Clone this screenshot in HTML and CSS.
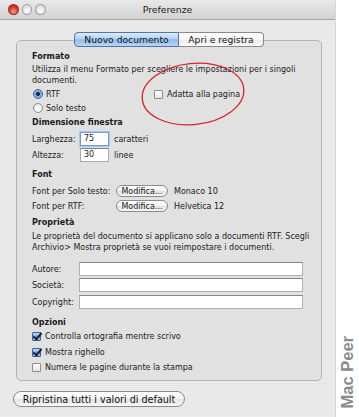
FILE: index.html
```html
<!DOCTYPE html>
<html lang="it">
  <head>
    <title>Preferenze</title>
    <meta charset="UTF-8" />
    <link rel="stylesheet" href="styles.css">
  </head>
  <body>
  <div class="screen">
    <div class="window">
      <div class="titlebar">
        <div class="lights">
          <span class="light light-red"></span>
          <span class="light"></span>
          <span class="light"></span>
        </div>
        <div class="title">Preferenze</div>
        <div class="lights-spacer"></div>
      </div>

      <div class="content">
        <div class="tabs">
          <div class="tab tab-active">Nuovo documento</div>
          <div class="tab tab-other">Apri e registra</div>
        </div>

        <div class="group">
          <div class="heading">Formato</div>
          <p class="desc">Utilizza il menu Formato per scegliere le impostazioni per i singoli<br>documenti.</p>
          <div class="row radio-row first-radio">
            <div class="radio-item">
              <span class="radio radio-on"></span>
              <span>RTF</span>
            </div>
            <div class="check-item">
              <span class="checkbox"></span>
              <span>Adatta alla pagina</span>
            </div>
          </div>
          <div class="row radio-row">
            <div class="radio-item">
              <span class="radio"></span>
              <span>Solo testo</span>
            </div>
          </div>

          <div class="heading heading-size">Dimensione finestra</div>
          <div class="row field-row field-first">
            <span class="field-label">Larghezza:</span>
            <span class="num-input num-focus">75</span>
            <span class="unit">caratteri</span>
          </div>
          <div class="row field-row">
            <span class="field-label">Altezza:</span>
            <span class="num-input">30</span>
            <span class="unit">linee</span>
          </div>

          <div class="heading heading-font">Font</div>
          <div class="row font-row font-first">
            <span class="font-label">Font per Solo testo:</span>
            <span class="small-btn">Modifica...</span>
            <span class="font-name">Monaco 10</span>
          </div>
          <div class="row font-row">
            <span class="font-label">Font per RTF:</span>
            <span class="small-btn">Modifica...</span>
            <span class="font-name">Helvetica 12</span>
          </div>

          <div class="heading heading-prop">Proprietà</div>
          <p class="desc desc-prop">Le proprietà del documento si applicano solo a documenti RTF. Scegli<br>Archivio&gt; Mostra proprietà se vuoi reimpostare i documenti.</p>
          <div class="row prop-row prop-first">
            <span class="prop-label">Autore:</span>
            <span class="text-input"></span>
          </div>
          <div class="row prop-row">
            <span class="prop-label">Società:</span>
            <span class="text-input"></span>
          </div>
          <div class="row prop-row prop-last">
            <span class="prop-label">Copyright:</span>
            <span class="text-input"></span>
          </div>

          <div class="heading heading-opt">Opzioni</div>
          <div class="row opt-row">
            <span class="checkbox checkbox-on"></span>
            <span>Controlla ortografia mentre scrivo</span>
          </div>
          <div class="row opt-row opt-mid">
            <span class="checkbox checkbox-on"></span>
            <span>Mostra righello</span>
          </div>
          <div class="row opt-row">
            <span class="checkbox"></span>
            <span>Numera le pagine durante la stampa</span>
          </div>
        </div>

        <div class="reset-btn">Ripristina tutti i valori di default</div>
      </div>
    </div>

    <div class="side">
      <span class="watermark">Mac Peer</span>
    </div>

    <!-- red marker drawn over the screenshot -->
    <svg class="marker" width="359" height="417" viewBox="0 0 359 417">
      <ellipse cx="193" cy="94" rx="51" ry="30.5" transform="rotate(-6 193 94)" fill="none" stroke="#d8232a" stroke-width="1.3"/>
    </svg>
  </div>
  </body>
</html>
```

FILE: styles.css
```css
 body {
  margin: 0;
  font-family: "DejaVu Sans", "Liberation Sans", sans-serif;
  font-size: 8px;
  color: #1a1a1a;
  background-color: white;
 }

 .screen {
  position: relative;
  display: flex;
  width: 359px;
  height: 417px;
  overflow: hidden;
 }

 .window {
  width: 336px;
  height: 417px;
  background: repeating-linear-gradient(to bottom, #ececec 0px, #ececec 1px, #e6e6e6 1px, #e6e6e6 2px);
  border-right: 1px solid #d6d6d6;
  box-sizing: border-box;
 }

 .titlebar {
  display: flex;
  align-items: center;
  height: 20px;
  box-sizing: border-box;
  background: linear-gradient(to bottom, #e9e9e9, #d2d2d2);
  border-bottom: 1px solid #a3a3a3;
 }

 .lights {
  display: flex;
  gap: 3px;
  width: 46px;
  padding-left: 8px;
  box-sizing: border-box;
 }

 .lights-spacer {
  width: 46px;
 }

 .light {
  width: 9px;
  height: 9px;
  border-radius: 50%;
  border: 1px solid #9d9d9d;
  background: radial-gradient(circle at 50% 70%, #ffffff, #dcdcdc 70%);
 }

 .light-red {
  border-color: #9c2a22;
  background: radial-gradient(circle at 50% 75%, #ff9a86, #d93a2c 55%, #a8221a);
 }

 .title {
  flex: 1;
  text-align: center;
  font-size: 9.3px;
  color: #222;
 }

 .content {
  padding: 12px 0 0 16px;
 }

 .tabs {
  position: relative;
  z-index: 1;
  display: flex;
  justify-content: center;
  width: 306px;
  height: 15px;
 }

 .tab {
  height: 15px;
  box-sizing: border-box;
  display: flex;
  align-items: center;
  justify-content: center;
  font-size: 9.2px;
  color: #111;
  border: 1px solid #8a8a8a;
 }

 .tab-active {
  width: 105px;
  border-radius: 4px 0 0 4px;
  border-color: #55749f;
  background: linear-gradient(to bottom, #dcebfb 0%, #b4d2f4 45%, #93bdee 52%, #b5d6f8 100%);
 }

 .tab-other {
  width: 85px;
  border-left: none;
  border-radius: 0 4px 4px 0;
  background: linear-gradient(to bottom, #ffffff 0%, #f6f6f6 50%, #ebebeb 52%, #fafafa 100%);
 }

 .group {
  width: 306px;
  height: 341px;
  margin-top: -7px;
  box-sizing: border-box;
  border: 1px solid #b4b4b4;
  border-radius: 5px;
  background-color: #e1e1e1;
  padding: 9px 18px 0 15px;
 }

 .row {
  display: flex;
  align-items: center;
 }

 .heading {
  height: 13px;
  line-height: 13px;
  font-weight: bold;
 }

 .desc {
  margin: 1px 0 0 0;
  line-height: 11px;
  white-space: nowrap;
 }

 .radio-row {
  height: 14px;
 }

 .first-radio {
  margin-top: 1px;
 }

 .radio-item {
  display: flex;
  align-items: center;
  width: 122px;
 }

 .radio {
  width: 10px;
  height: 10px;
  margin: 0 3px 0 1px;
  box-sizing: border-box;
  border-radius: 50%;
  border: 1px solid #8c8c8c;
  background: radial-gradient(circle at 50% 75%, #ffffff, #e4e4e4);
 }

 .radio-on {
  border-color: #3f5f8c;
  background: radial-gradient(circle, #1d2b44 0px, #1d2b44 1.6px, #6da3e6 2.2px, #a8cbf3 100%);
 }

 .check-item {
  display: flex;
  align-items: center;
 }

 .checkbox {
  width: 9px;
  height: 9px;
  margin-right: 4px;
  box-sizing: border-box;
  border: 1px solid #8c8c8c;
  border-radius: 1px;
  background: linear-gradient(to bottom, #ffffff, #e6e6e6);
  position: relative;
 }

 .checkbox-on {
  border-color: #3f5f8c;
  background: linear-gradient(to bottom, #c7def8, #6ea3e4 55%, #9cc4f2);
 }

 .checkbox-on::after {
  content: "";
  position: absolute;
  left: 2px;
  top: -2px;
  width: 3px;
  height: 7px;
  border-right: 2px solid #14213a;
  border-bottom: 2px solid #14213a;
  transform: rotate(40deg);
 }

 .heading-size {
  margin-top: 1px;
 }

 .field-row {
  height: 14px;
  margin-top: 2px;
 }

 .field-first {
  margin-top: 3px;
 }

 .field-label {
  width: 48px;
 }

 .num-input {
  width: 29px;
  height: 14px;
  box-sizing: border-box;
  padding-left: 3px;
  line-height: 12px;
  background-color: white;
  border: 1px solid #a9a9a9;
  border-top-color: #808080;
 }

 .num-focus {
  border-color: #6f9ed8;
  box-shadow: 0 0 0 1px #a6c7ef;
 }

 .unit {
  margin-left: 5px;
 }

 .heading-font {
  margin-top: 6px;
 }

 .font-row {
  height: 14px;
  margin-top: 1px;
 }

 .font-first {
  margin-top: 3px;
 }

 .font-label {
  width: 84px;
 }

 .small-btn {
  width: 52px;
  height: 12px;
  box-sizing: border-box;
  display: flex;
  align-items: center;
  justify-content: center;
  border: 1px solid #8a8a8a;
  border-radius: 6px;
  background: linear-gradient(to bottom, #ffffff 0%, #f1f1f1 50%, #e2e2e2 52%, #f7f7f7 100%);
 }

 .font-name {
  margin-left: 6px;
 }

 .heading-prop {
  margin-top: 3px;
 }

 .desc-prop {
  margin-top: 2px;
 }

 .prop-row {
  height: 14px;
  margin-top: 2px;
 }

 .prop-first {
  margin-top: 9px;
 }

 .prop-last {
  margin-top: 3px;
 }

 .prop-label {
  width: 47px;
 }

 .text-input {
  flex: 1;
  height: 14px;
  box-sizing: border-box;
  background-color: white;
  border: 1px solid #b0b0b0;
  border-top-color: #858585;
 }

 .heading-opt {
  margin-top: 7px;
 }

 .opt-row {
  height: 15px;
 }

 .opt-mid {
  height: 16px;
 }

 .reset-btn {
  width: 172px;
  height: 16px;
  margin: 10px 0 0 -3px;
  box-sizing: border-box;
  display: flex;
  align-items: center;
  justify-content: center;
  font-size: 9.6px;
  color: #111;
  border: 1px solid #8a8a8a;
  border-radius: 8px;
  background: linear-gradient(to bottom, #ffffff 0%, #f3f3f3 50%, #e3e3e3 52%, #f8f8f8 100%);
 }

 .side {
  flex: 1;
  display: flex;
  flex-direction: column;
  justify-content: flex-end;
  align-items: center;
  padding-bottom: 9px;
 }

 .watermark {
  writing-mode: vertical-rl;
  transform: rotate(180deg);
  font-family: "Liberation Sans", Arial, sans-serif;
  font-weight: bold;
  font-size: 16.5px;
  color: #8a8a8a;
 }

 .marker {
  position: absolute;
  left: 0;
  top: 0;
  pointer-events: none;
 }
```
